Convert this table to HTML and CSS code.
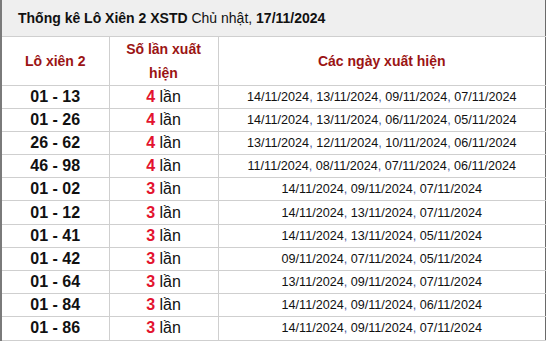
FILE: index.html
```html
<!DOCTYPE html>
<html lang="vi">
<head>
<meta charset="utf-8">
<link rel="stylesheet" href="styles.css">
</head>
<body>
<table class="stats">
  <colgroup>
    <col class="col-pair">
    <col class="col-cnt">
    <col class="col-dates">
  </colgroup>
  <thead>
    <tr class="title-row">
      <th colspan="3" class="title"><b>Thống kê Lô Xiên 2 XSTD</b> Chủ nhật, <b>17/11/2024</b></th>
    </tr>
    <tr class="head-row">
      <th>Lô xiên 2</th>
      <th class="wrap">Số lần xuất hiện</th>
      <th>Các ngày xuất hiện</th>
    </tr>
  </thead>
  <tbody>
    <tr><td class="pair">01 - 13</td><td class="cnt"><b>4</b> lần</td><td class="dates">14/11/2024<i>,</i> 13/11/2024<i>,</i> 09/11/2024<i>,</i> 07/11/2024</td></tr>
    <tr><td class="pair">01 - 26</td><td class="cnt"><b>4</b> lần</td><td class="dates">14/11/2024<i>,</i> 13/11/2024<i>,</i> 06/11/2024<i>,</i> 05/11/2024</td></tr>
    <tr><td class="pair">26 - 62</td><td class="cnt"><b>4</b> lần</td><td class="dates">13/11/2024<i>,</i> 12/11/2024<i>,</i> 10/11/2024<i>,</i> 06/11/2024</td></tr>
    <tr><td class="pair">46 - 98</td><td class="cnt"><b>4</b> lần</td><td class="dates">11/11/2024<i>,</i> 08/11/2024<i>,</i> 07/11/2024<i>,</i> 06/11/2024</td></tr>
    <tr><td class="pair">01 - 02</td><td class="cnt"><b>3</b> lần</td><td class="dates">14/11/2024<i>,</i> 09/11/2024<i>,</i> 07/11/2024</td></tr>
    <tr><td class="pair">01 - 12</td><td class="cnt"><b>3</b> lần</td><td class="dates">14/11/2024<i>,</i> 13/11/2024<i>,</i> 07/11/2024</td></tr>
    <tr><td class="pair">01 - 41</td><td class="cnt"><b>3</b> lần</td><td class="dates">14/11/2024<i>,</i> 13/11/2024<i>,</i> 05/11/2024</td></tr>
    <tr><td class="pair">01 - 42</td><td class="cnt"><b>3</b> lần</td><td class="dates">09/11/2024<i>,</i> 07/11/2024<i>,</i> 05/11/2024</td></tr>
    <tr><td class="pair">01 - 64</td><td class="cnt"><b>3</b> lần</td><td class="dates">13/11/2024<i>,</i> 09/11/2024<i>,</i> 07/11/2024</td></tr>
    <tr><td class="pair">01 - 84</td><td class="cnt"><b>3</b> lần</td><td class="dates">14/11/2024<i>,</i> 09/11/2024<i>,</i> 06/11/2024</td></tr>
    <tr><td class="pair">01 - 86</td><td class="cnt"><b>3</b> lần</td><td class="dates">14/11/2024<i>,</i> 09/11/2024<i>,</i> 07/11/2024</td></tr>
  </tbody>
</table>
</body>
</html>
```

FILE: styles.css
```css
html, body {
  margin: 0;
  padding: 0;
  background: #ffffff;
}

body {
  font-family: "Liberation Sans", Arial, sans-serif;
  color: #111111;
  width: 546px;
  height: 342px;
  overflow: hidden;
}

.stats {
  width: 546px;
  border-collapse: collapse;
  table-layout: fixed;
  border-left: 2px solid #7a7a7a;
  border-right: 1px solid #6a6a6a;
}

.col-pair { width: 108px; }
.col-cnt { width: 109px; }
.col-dates { width: auto; }

.stats th,
.stats td {
  padding: 0;
  text-align: center;
  vertical-align: middle;
  border-bottom: 1px solid #cfcfcf;
  white-space: nowrap;
}

.title-row {
  height: 36px;
}

.stats .title {
  background: #efefef;
  font-size: 14px;
  font-weight: normal;
  text-align: left;
  padding-left: 16px;
  color: #111111;
}

.title b {
  font-weight: bold;
}

.head-row {
  height: 45px;
}

.head-row th {
  font-size: 14px;
  font-weight: bold;
  color: #9b1414;
  line-height: 24px;
}

.stats .wrap {
  white-space: normal;
  padding: 0 14px;
}

.head-row th + th,
tbody td + td {
  border-left: 1px solid #cfcfcf;
}

tbody tr {
  height: 23.2px;
}

.pair {
  font-size: 16px;
  font-weight: bold;
  color: #111111;
}

.cnt {
  font-size: 16px;
  color: #111111;
}

.cnt b {
  color: #e3132e;
}

.dates {
  font-size: 12.6px;
  color: #111111;
}

.dates i {
  font-style: normal;
  color: #4a5a9c;
}
```
